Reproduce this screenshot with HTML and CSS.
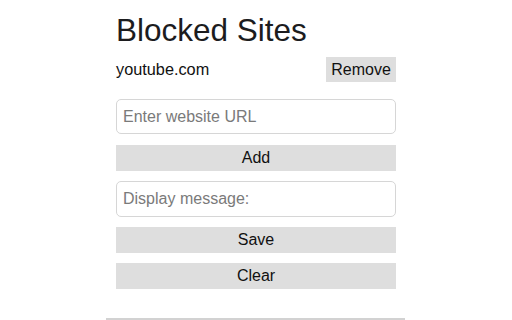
FILE: index.html
```html
<!DOCTYPE html>
<html>
<head>
<meta charset="utf-8">
<link rel="stylesheet" href="styles.css">
</head>
<body>
<main class="panel">
  <h1 class="title">Blocked Sites</h1>
  <div class="site-row">
    <span class="site-name">youtube.com</span>
    <button class="btn btn-small">Remove</button>
  </div>
  <input class="field field-url" type="text" placeholder="Enter website URL">
  <button class="btn btn-full btn-add">Add</button>
  <input class="field field-msg" type="text" placeholder="Display message:">
  <button class="btn btn-full btn-save">Save</button>
  <button class="btn btn-full btn-clear">Clear</button>
</main>
<div class="divider"></div>
</body>
</html>
```
FILE: styles.css
```css
html, body {
  margin: 0;
  padding: 0;
  background: #ffffff;
}
body {
  font-family: "Liberation Sans", Arial, sans-serif;
  color: #111111;
  overflow: hidden;
}
.panel {
  width: 280px;
  margin: 0 auto;
  padding-top: 12px;
  display: flex;
  flex-direction: column;
}
.title {
  margin: 0;
  font-size: 31.5px;
  line-height: 37px;
  font-weight: normal;
  color: #1c1c1e;
}
.site-row {
  margin-top: 8px;
  height: 25px;
  display: flex;
  justify-content: space-between;
  align-items: center;
}
.site-name {
  font-size: 16.3px;
}
.btn {
  font-family: "Liberation Sans", Arial, sans-serif;
  font-size: 16px;
  color: #111111;
  background: #dedede;
  border: none;
  border-radius: 0;
  padding: 0;
  margin: 0;
}
.btn-small {
  height: 25px;
  width: 70px;
}
.btn-full {
  width: 280px;
  height: 26px;
}
.field {
  box-sizing: border-box;
  width: 280px;
  margin: 0;
  border: 1px solid #d6d6d6;
  border-radius: 5px;
  padding: 0 6px;
  font-family: "Liberation Sans", Arial, sans-serif;
  font-size: 16px;
  color: #111111;
  background: #ffffff;
  outline: none;
}
.field::placeholder {
  color: #7a7a7a;
}
.field-url {
  margin-top: 17px;
  height: 35px;
}
.btn-add {
  margin-top: 11px;
}
.field-msg {
  margin-top: 10px;
  height: 36px;
}
.btn-save {
  margin-top: 10px;
}
.btn-clear {
  margin-top: 10px;
}
.divider {
  width: 299px;
  height: 2px;
  margin: 29px 0 0 106px;
  background: #d2d2d2;
}
```
